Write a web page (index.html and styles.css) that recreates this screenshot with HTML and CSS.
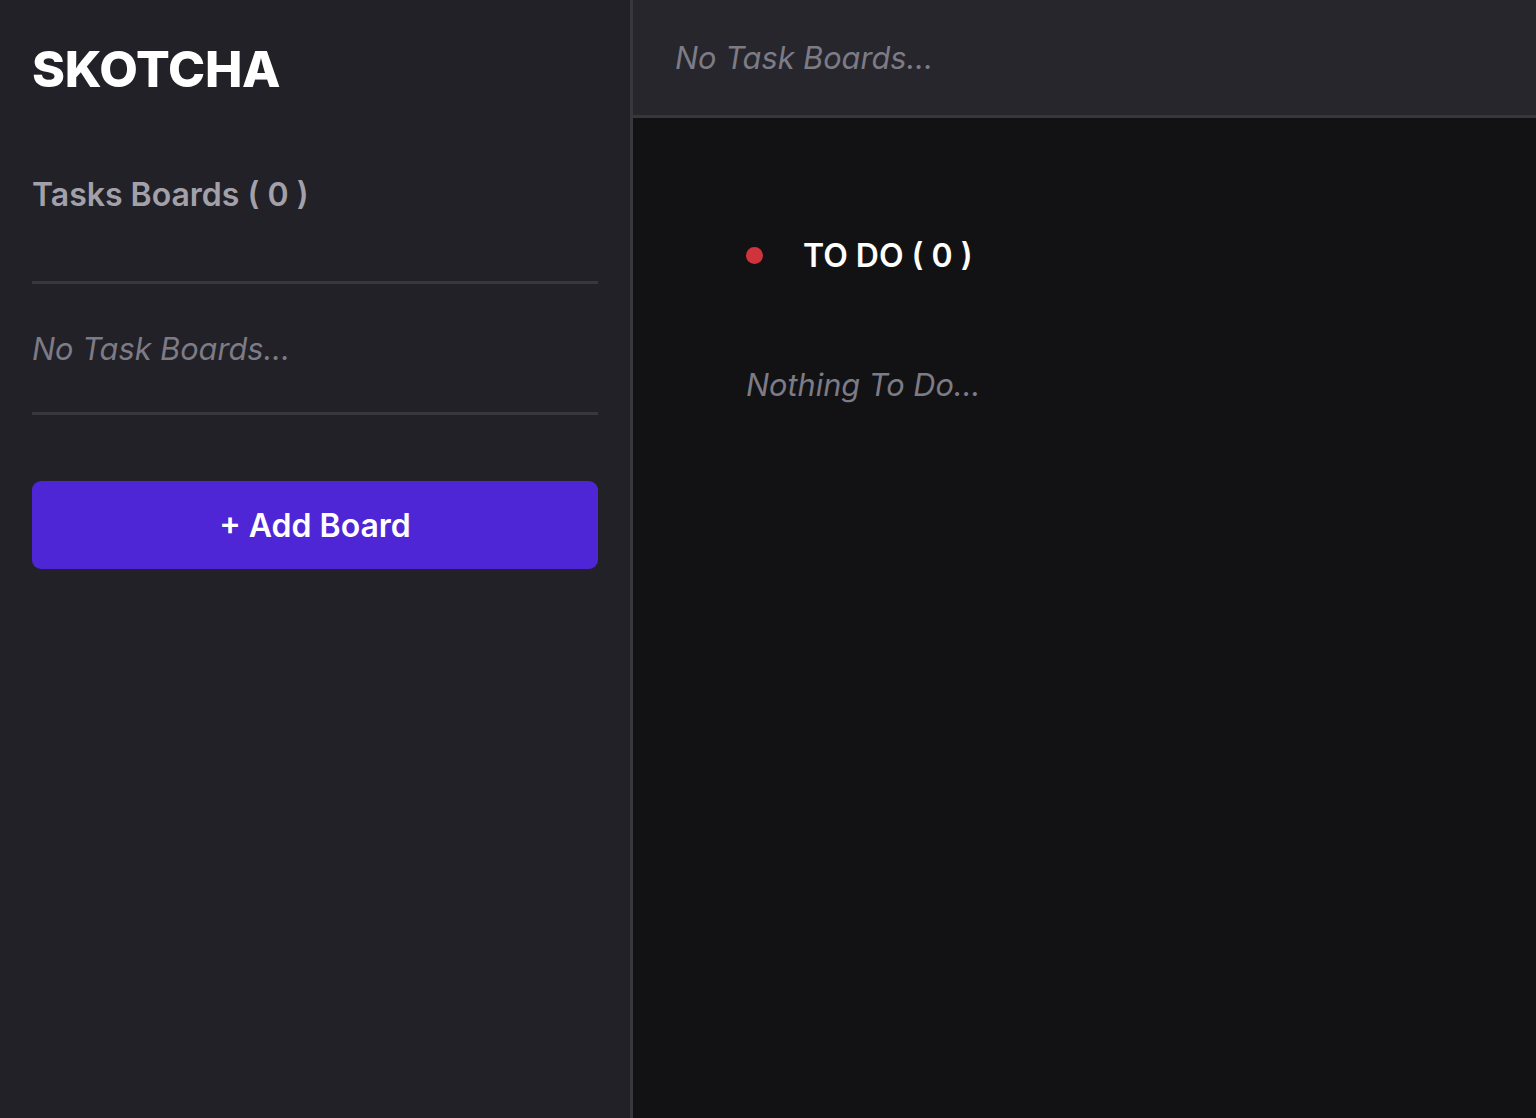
FILE: index.html
```html
<!DOCTYPE html>
<html lang="en">
<head>
<meta charset="utf-8">
<title>Skotcha</title>
<link rel="stylesheet" href="styles.css">
</head>
<body>
<div class="app">
  <aside class="sidebar">
    <h1 class="logo">SKOTCHA</h1>
    <h2 class="boards-title">Tasks Boards ( 0 )</h2>
    <div class="boards-list">
      <p class="empty">No Task Boards...</p>
    </div>
    <button class="add-btn" type="button">+ Add Board</button>
  </aside>
  <main class="main">
    <header class="topbar">
      <p class="empty">No Task Boards...</p>
    </header>
    <section class="board">
      <div class="column">
        <div class="column-head">
          <span class="dot"></span>
          <h3 class="column-title">TO DO ( 0 )</h3>
        </div>
        <p class="empty column-empty">Nothing To Do...</p>
      </div>
    </section>
  </main>
</div>
</body>
</html>
```

FILE: styles.css
```css
* { box-sizing: border-box; }
html, body { margin: 0; height: 100%; }
body {
  font-family: Inter, "Noto Sans", sans-serif;
  background: #121214;
  color: #fff;
}
.app {
  display: flex;
  height: 100vh;
}
.sidebar {
  width: 633px;
  flex: none;
  background: #222127;
  border-right: 3px solid #38373e;
  padding: 32px 32px;
  display: flex;
  flex-direction: column;
}
.logo {
  margin: 0;
  font-size: 50px;
  line-height: 60px;
  font-weight: 800;
  letter-spacing: -0.005em;
  margin-top: 7px;
}
.boards-title {
  margin: 0;
  margin-top: 76px;
  font-size: 32px;
  line-height: 40px;
  font-weight: 600;
  color: #a2a1aa;
}
.boards-list {
  margin-top: 66px;
  border-top: 3px solid #38373e;
  border-bottom: 3px solid #38373e;
  height: 134px;
  display: flex;
  align-items: center;
}
.empty {
  margin: 0;
  font-size: 30.7px;
  font-style: italic;
  color: #7c7b86;
}
.add-btn {
  margin-top: 66px;
  height: 88px;
  border: none;
  border-radius: 9px;
  background: #4f26d6;
  color: #fff;
  font-family: inherit;
  font-size: 32px;
  font-weight: 600;
}
.main {
  flex: 1;
  display: flex;
  flex-direction: column;
  min-width: 0;
}
.topbar {
  height: 118px;
  background: #27262c;
  border-bottom: 3px solid #38373e;
  padding: 0 42px;
  display: flex;
  align-items: center;
}
.board {
  flex: 1;
  padding: 118px 113px;
}
.column-head {
  display: flex;
  align-items: center;
  gap: 40px;
}
.dot {
  width: 17px;
  height: 17px;
  border-radius: 50%;
  background: #cf343c;
  margin-top: -1px;
}
.column-title {
  margin: 0;
  font-size: 32px;
  line-height: 40px;
  font-weight: 600;
}
.column-empty {
  margin-top: 90px;
}
```
